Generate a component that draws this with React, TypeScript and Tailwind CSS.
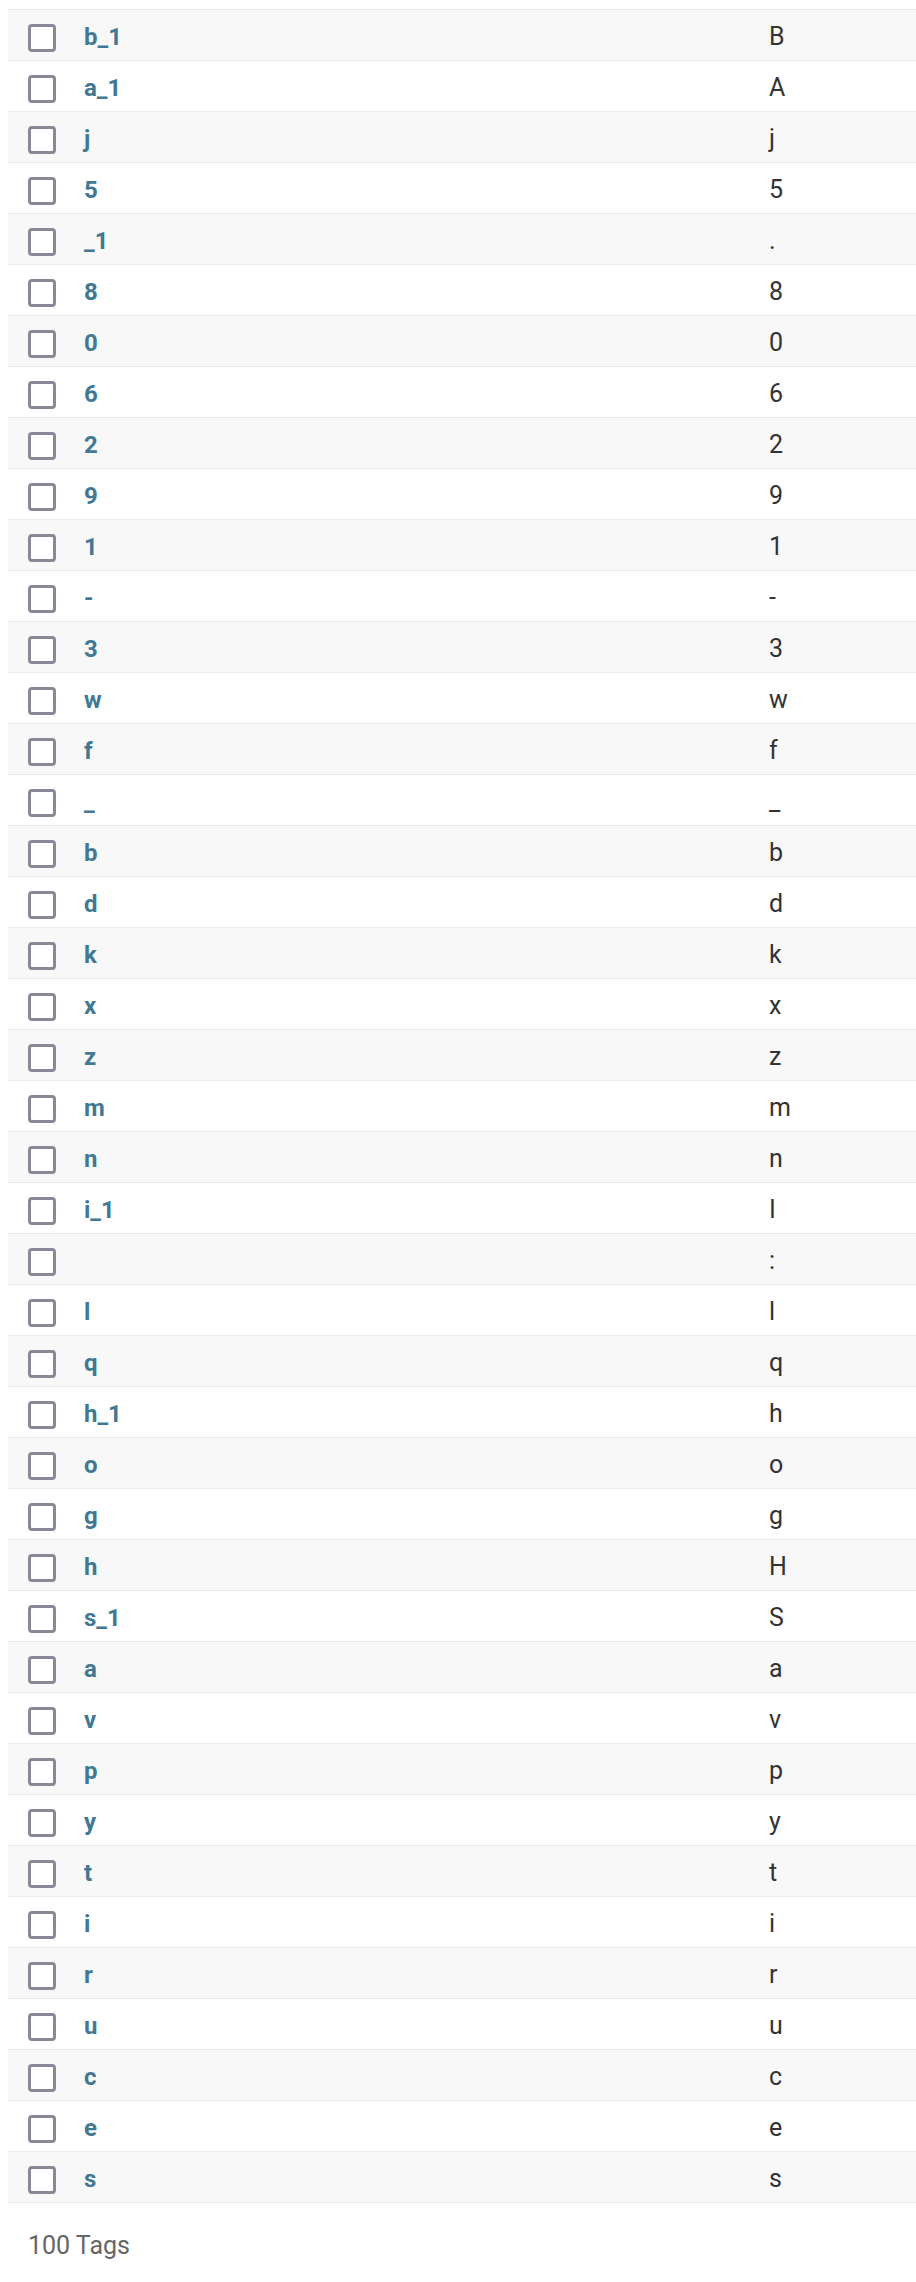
import React from "react";

const rows: [string, string][] = [
  ["b_1", "B"],
  ["a_1", "A"],
  ["j", "j"],
  ["5", "5"],
  ["_1", "."],
  ["8", "8"],
  ["0", "0"],
  ["6", "6"],
  ["2", "2"],
  ["9", "9"],
  ["1", "1"],
  ["-", "-"],
  ["3", "3"],
  ["w", "w"],
  ["f", "f"],
  ["_", "_"],
  ["b", "b"],
  ["d", "d"],
  ["k", "k"],
  ["x", "x"],
  ["z", "z"],
  ["m", "m"],
  ["n", "n"],
  ["i_1", "I"],
  ["", ":"],
  ["l", "l"],
  ["q", "q"],
  ["h_1", "h"],
  ["o", "o"],
  ["g", "g"],
  ["h", "H"],
  ["s_1", "S"],
  ["a", "a"],
  ["v", "v"],
  ["p", "p"],
  ["y", "y"],
  ["t", "t"],
  ["i", "i"],
  ["r", "r"],
  ["u", "u"],
  ["c", "c"],
  ["e", "e"],
  ["s", "s"],
];

export default function App() {
  return (
    <div
      className="min-h-[2282px] bg-white pl-2 pt-[9px]"
      style={{ fontFamily: "Roboto, 'Liberation Sans', sans-serif" }}
    >
      <div className="border-t border-[#eaeaea]">
        {rows.map(([name, value], i) => (
          <div
            key={i}
            className={
              "flex h-[51px] border-b border-[#eaeaea] " +
              (i % 2 === 0 ? "bg-[#f8f8f8]" : "bg-white")
            }
          >
            <div className="w-[76px] shrink-0 pl-5 pt-[14px]">
              <div className="h-7 w-7 rounded-[4px] border-[3px] border-[#8a8896] bg-white" />
            </div>
            <div className="w-[685px] shrink-0 pt-[13px] text-[24px] font-bold leading-[28px] text-[#417893]">
              {name}
            </div>
            <div className="pt-[12px] text-[25px] leading-[30px] text-[#333333]">
              {value}
            </div>
          </div>
        ))}
      </div>
      <div className="mt-[28px] pl-5 text-[25px] leading-[30px] text-[#666666]">
        100 Tags
      </div>
    </div>
  );
}
